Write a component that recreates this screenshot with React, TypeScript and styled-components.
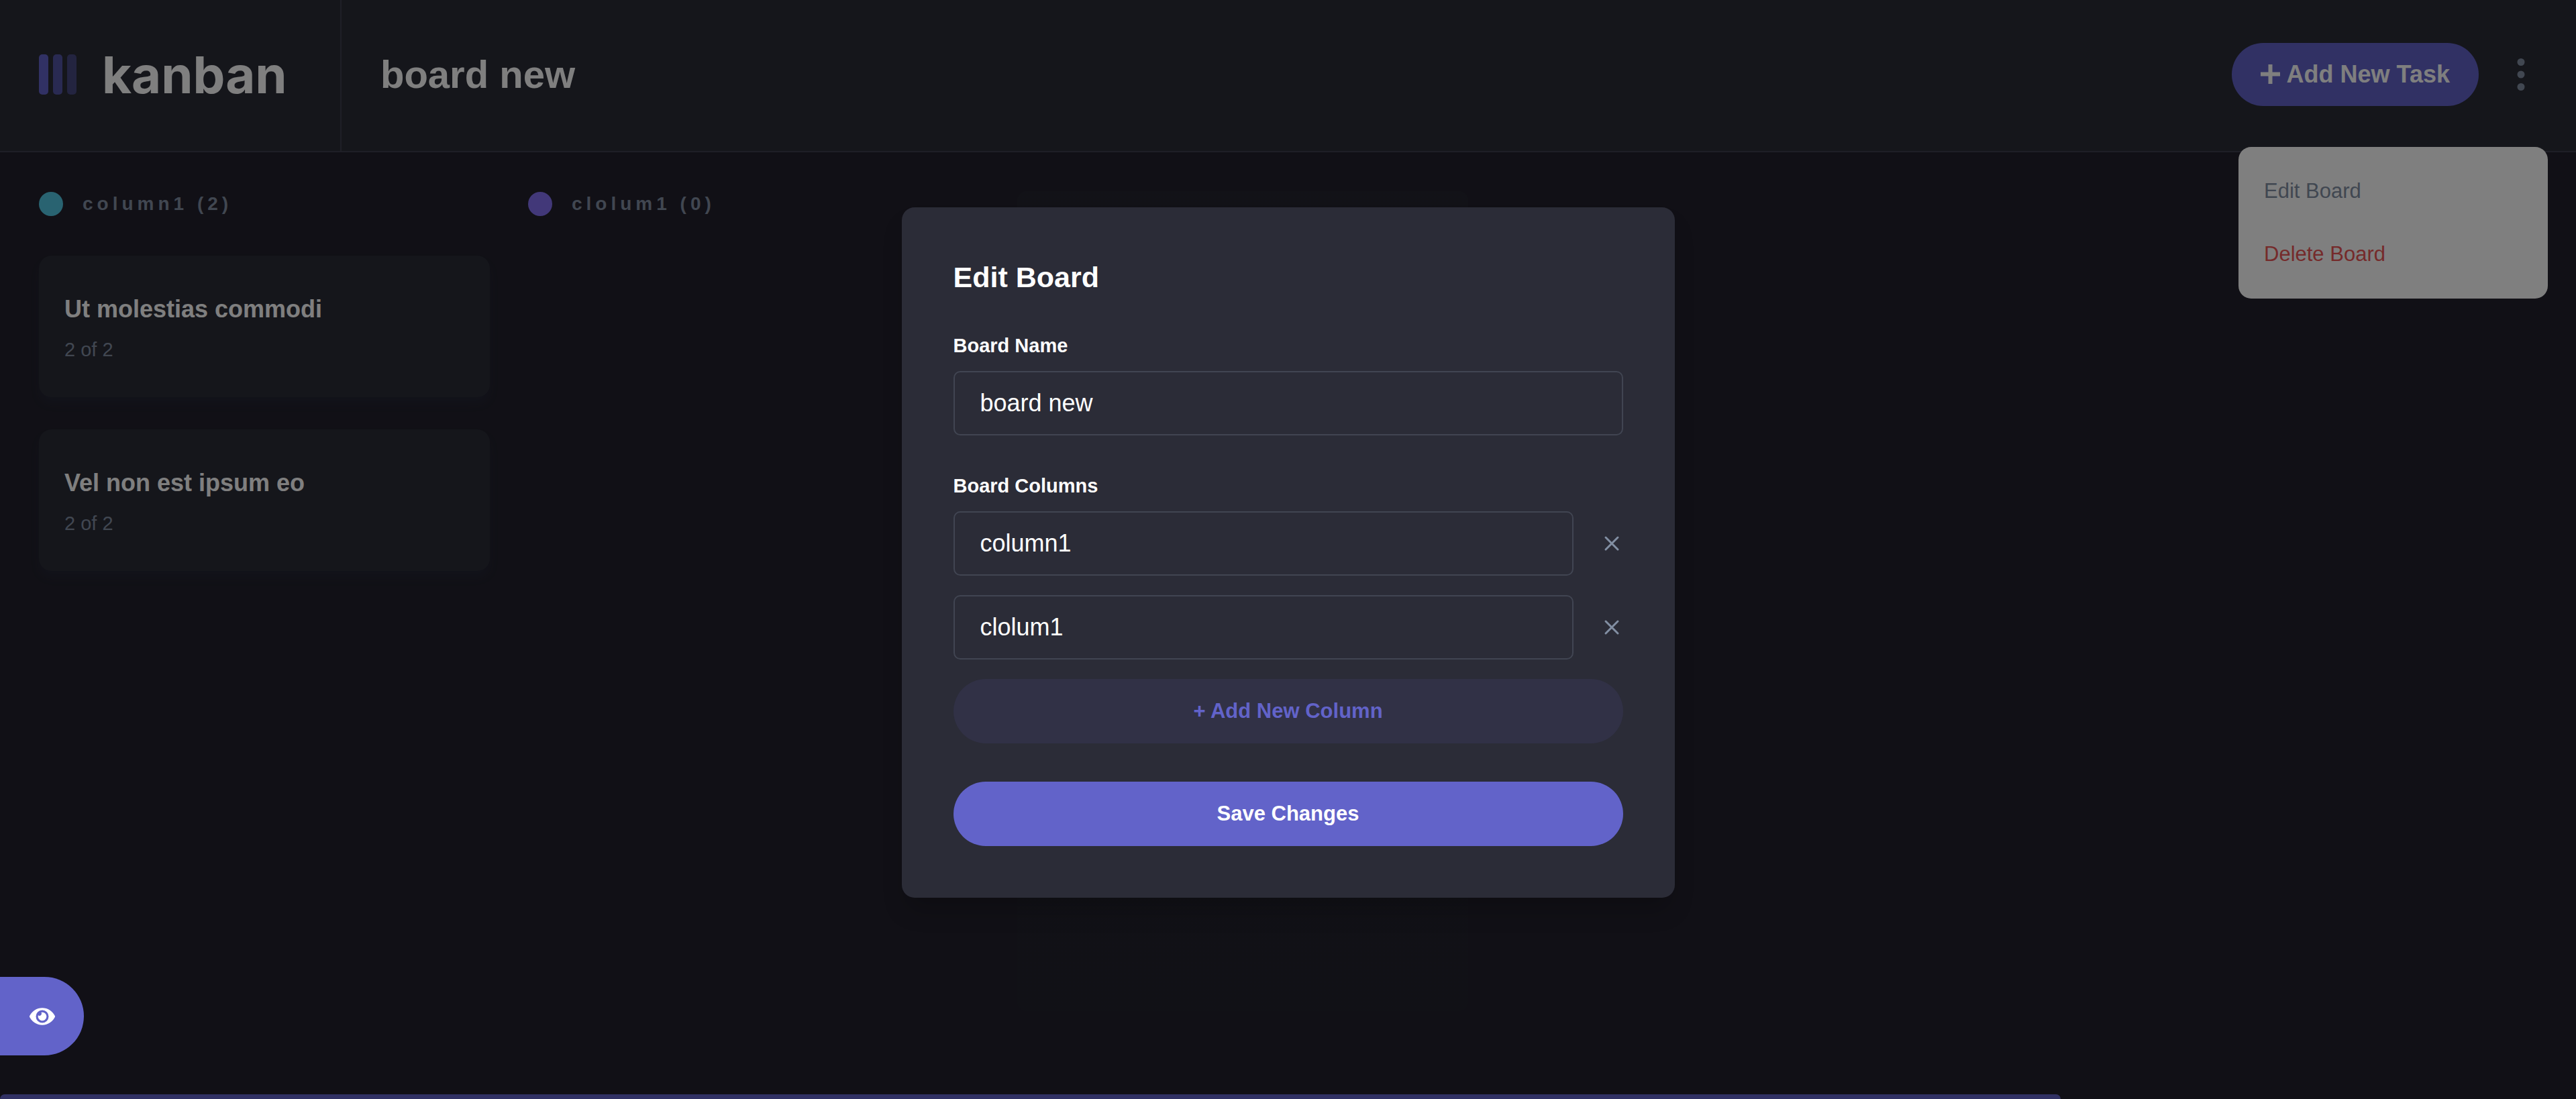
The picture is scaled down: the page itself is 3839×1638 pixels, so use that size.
import React from "react";
import styled, { createGlobalStyle } from "styled-components";
import { FaEye } from "react-icons/fa";

const GlobalStyle = createGlobalStyle`
  *, *::before, *::after { box-sizing: border-box; }
  html, body, #root { height: 100%; }
  body {
    margin: 0;
    overflow: hidden;
    background: #20212c;
    color: #ffffff;
    font-family: "Liberation Sans", Arial, Helvetica, sans-serif;
  }
  h1, h2, h3, p { margin: 0; }
  button, input { font: inherit; }
  button { border: 0; padding: 0; color: inherit; cursor: pointer; }
`;

const Page = styled.div`
  position: relative;
  height: 100%;
  display: flex;
  flex-direction: column;
  background: #22212c;
`;

const Header = styled.header`
  position: relative;
  flex: none;
  display: flex;
  align-items: stretch;
  height: 227px;
  background: #2b2c37;
  border-bottom: 2px solid #3e3f4e;
`;

const Brand = styled.div`
  display: flex;
  align-items: center;
  gap: 38px;
  width: 509px;
  padding: 0 0 4px 58px;
  border-right: 2px solid #3e3f4e;
`;

const Bars = styled.div`
  display: flex;
  gap: 7px;
`;

const Bar = styled.span<{ $fade: number }>`
  width: 14px;
  height: 60px;
  border-radius: 5px;
  background: #6263c9;
  opacity: ${(p) => p.$fade};
`;

const BrandName = styled.span`
  font-family: Inter, "Liberation Sans", sans-serif;
  font-size: 76px;
  line-height: 80px;
  font-weight: 700;
`;

const HeaderMain = styled.div`
  flex: 1;
  display: flex;
  align-items: center;
  justify-content: space-between;
  padding: 0 68px 4px 58px;
`;

const BoardTitle = styled.h1`
  font-size: 58px;
  line-height: 72px;
  font-weight: 700;
`;

const Actions = styled.div`
  display: flex;
  align-items: center;
  gap: 48px;
`;

const AddTask = styled.button`
  display: flex;
  align-items: center;
  gap: 10px;
  height: 94px;
  padding: 0 43px;
  border-radius: 47px;
  background: #6263c9;
  font-size: 36px;
  font-weight: 700;
`;

const MenuToggle = styled.button`
  display: flex;
  width: 29px;
  justify-content: center;
  background: none;
`;

const Menu = styled.div`
  position: absolute;
  top: 219px;
  right: 42px;
  display: flex;
  flex-direction: column;
  align-items: flex-start;
  gap: 48px;
  width: 461px;
  padding: 43px 38px;
  border-radius: 19px;
  background: #ffffff;
`;

const MenuItem = styled.button<{ $danger?: boolean }>`
  background: none;
  color: ${(p) => (p.$danger ? "#ea5555" : "#828fa3")};
  font-size: 31px;
  line-height: 46px;
`;

const Board = styled.main`
  flex: 1;
  display: flex;
  align-items: flex-start;
  gap: 57px;
  padding: 58px;
`;

const Column = styled.section`
  flex: none;
  width: 672px;
  display: flex;
  flex-direction: column;
  gap: 48px;
`;

const ColumnHead = styled.h2`
  display: flex;
  align-items: center;
  gap: 29px;
  margin-bottom: 10px;
  color: #828fa3;
  font-size: 28px;
  line-height: 38px;
  font-weight: 700;
  letter-spacing: 6px;
`;

const Dot = styled.span<{ $color: string }>`
  width: 36px;
  height: 36px;
  border-radius: 50%;
  background: ${(p) => p.$color};
`;

const Card = styled.article`
  display: flex;
  flex-direction: column;
  gap: 19px;
  padding: 58px 38px 52px;
  border-radius: 19px;
  background: #2b2c37;
  box-shadow: 0 10px 14px rgba(54, 78, 126, 0.1);
`;

const CardTitle = styled.h3`
  font-size: 36px;
  line-height: 44px;
  font-weight: 700;
`;

const CardMeta = styled.p`
  color: #828fa3;
  font-size: 29px;
  line-height: 38px;
`;

const EmptyColumn = styled.div`
  flex: none;
  align-self: stretch;
  width: 672px;
  margin-bottom: 66px;
  border-radius: 14px;
  background: linear-gradient(to bottom, rgba(43, 44, 55, 0.3), rgba(43, 44, 55, 0.1));
`;

const ScrollThumb = styled.div`
  flex: none;
  width: 80%;
  height: 7px;
  border-radius: 10px 10px 0 0;
  background: #6263c9;
`;

const Overlay = styled.div`
  position: absolute;
  inset: 0;
  display: flex;
  align-items: center;
  justify-content: center;
  padding-top: 9px;
  background: rgba(0, 0, 0, 0.5);
`;

const Dialog = styled.form`
  display: flex;
  flex-direction: column;
  width: 1152px;
  padding: 77px;
  border-radius: 19px;
  background: #2b2c37;
  box-shadow: 0 24px 36px -7px rgba(0, 0, 0, 0.2);
`;

const DialogTitle = styled.h2`
  font-size: 43px;
  line-height: 54px;
  font-weight: 700;
`;

const Field = styled.div`
  display: flex;
  flex-direction: column;
  gap: 19px;
  margin-top: 56px;
`;

const FieldLabel = styled.label`
  font-size: 29px;
  line-height: 38px;
  font-weight: 700;
`;

const TextBox = styled.input`
  flex: 1;
  min-width: 0;
  height: 96px;
  padding: 0 38px;
  border: 2px solid #414552;
  border-radius: 10px;
  background: transparent;
  color: #ffffff;
  font-size: 36px;
  outline: none;
`;

const FieldRow = styled.div`
  display: flex;
  align-items: center;
  gap: 40px;
`;

const ColumnList = styled.div`
  display: flex;
  flex-direction: column;
  gap: 29px;
`;

const RemoveButton = styled.button`
  display: flex;
  justify-content: center;
  width: 34px;
  background: none;
  color: #828fa3;
`;

const PillButton = styled.button<{ $primary?: boolean }>`
  height: 96px;
  margin-top: ${(p) => (p.$primary ? 57 : 29)}px;
  border-radius: 48px;
  background: ${(p) => (p.$primary ? "#6263c9" : "#313146")};
  color: ${(p) => (p.$primary ? "#ffffff" : "#6263c9")};
  font-size: 31px;
  font-weight: 700;
`;

const ShowSidebar = styled.button`
  position: absolute;
  left: 0;
  bottom: 65px;
  display: flex;
  align-items: center;
  justify-content: center;
  width: 125px;
  height: 117px;
  border-radius: 0 59px 59px 0;
  background: #6263c9;
`;

const PlusIcon = () => (
  <svg width="29" height="29" viewBox="0 0 29 29" aria-hidden="true">
    <path d="M11.500 0h6v11.500H29v6H17.500V29h-6V17.500H0v-6h11.500z" fill="currentColor" />
  </svg>
);

const DotsIcon = () => (
  <svg width="12" height="48" viewBox="0 0 12 48" fill="#828fa3" aria-hidden="true">
    <circle cx="6" cy="5.500" r="5.500" />
    <circle cx="6" cy="24" r="5.500" />
    <circle cx="6" cy="42.500" r="5.500" />
  </svg>
);

const CrossIcon = () => (
  <svg width="24" height="24" viewBox="0 0 24 24" aria-hidden="true">
    <path d="M3 3l18 18M21 3L3 21" stroke="currentColor" strokeWidth="3" strokeLinecap="round" />
  </svg>
);

const columns = [
  { name: "column1", color: "#52c7e3", tasks: ["Ut molestias commodi", "Vel non est ipsum eo"] },
  { name: "clolum1", color: "#8471f2", tasks: [] as string[] },
];

export default function App() {
  return (
    <>
      <GlobalStyle />
      <Page>
        <Header>
          <Brand>
            <Bars>
              <Bar $fade={1} />
              <Bar $fade={0.75} />
              <Bar $fade={0.5} />
            </Bars>
            <BrandName>kanban</BrandName>
          </Brand>
          <HeaderMain>
            <BoardTitle>board new</BoardTitle>
            <Actions>
              <AddTask type="button">
                <PlusIcon />
                Add New Task
              </AddTask>
              <MenuToggle type="button" aria-label="Board menu">
                <DotsIcon />
              </MenuToggle>
            </Actions>
          </HeaderMain>
          <Menu>
            <MenuItem type="button">Edit Board</MenuItem>
            <MenuItem type="button" $danger>Delete Board</MenuItem>
          </Menu>
        </Header>
        <Board>
          {columns.map((column) => (
            <Column key={column.name}>
              <ColumnHead>
                <Dot $color={column.color} />
                {column.name} ({column.tasks.length})
              </ColumnHead>
              {column.tasks.map((task) => (
                <Card key={task}>
                  <CardTitle>{task}</CardTitle>
                  <CardMeta>2 of 2</CardMeta>
                </Card>
              ))}
            </Column>
          ))}
          <EmptyColumn />
        </Board>
        <ScrollThumb />
        <Overlay>
          <Dialog onSubmit={(e) => e.preventDefault()}>
            <DialogTitle>Edit Board</DialogTitle>
            <Field>
              <FieldLabel htmlFor="board-name">Board Name</FieldLabel>
              <FieldRow>
                <TextBox id="board-name" type="text" defaultValue="board new" />
              </FieldRow>
            </Field>
            <Field>
              <FieldLabel htmlFor="column-0">Board Columns</FieldLabel>
              <ColumnList>
                {columns.map((column, i) => (
                  <FieldRow key={column.name}>
                    <TextBox id={`column-${i}`} type="text" aria-label={`Column ${i + 1}`} defaultValue={column.name} />
                    <RemoveButton type="button" aria-label={`Remove ${column.name}`}>
                      <CrossIcon />
                    </RemoveButton>
                  </FieldRow>
                ))}
              </ColumnList>
            </Field>
            <PillButton type="button">+ Add New Column</PillButton>
            <PillButton type="submit" $primary>Save Changes</PillButton>
          </Dialog>
        </Overlay>
        <ShowSidebar type="button" aria-label="Show sidebar">
          <FaEye size={38} />
        </ShowSidebar>
      </Page>
    </>
  );
}
